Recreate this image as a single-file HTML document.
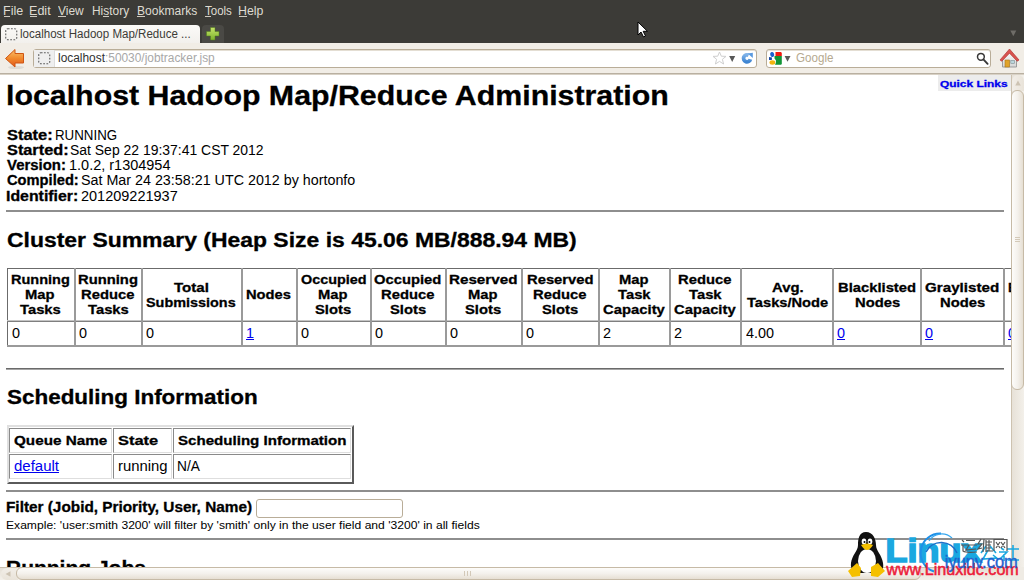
<!DOCTYPE html>
<html><head><meta charset="utf-8">
<style>
*{box-sizing:border-box}
html,body{margin:0;padding:0;width:1024px;height:580px;overflow:hidden;background:#fff;font-family:"Liberation Sans",sans-serif}
.a{position:absolute}
.t{position:absolute;white-space:pre;line-height:1;transform-origin:0 0}
.t[style*="bold"]{-webkit-text-stroke:0.3px currentColor}
#menubar{left:0;top:0;width:1024px;height:43px;background:#3c3b37}
#tab{left:1px;top:25px;width:199px;height:19px;background:linear-gradient(#fbfaf8,#f2f0ec);border-radius:4px 4px 0 0}
#newtab{left:202px;top:25px;width:22px;height:18px;background:#4a4945;border-radius:4px 4px 0 0}
#toolbar{left:0;top:43px;width:1024px;height:32px;background:#f1ede6;border-bottom:1px solid #d8d1c5;box-shadow:inset 0 -1px 0 #b9b0a1}
.urlbar{top:49px;height:19px;background:#fff;border:1px solid #b9ad98;border-radius:3px;box-shadow:inset 0 1px 0 #e4ded3}
#vscroll{left:1011px;top:75px;width:13px;height:492px;background:linear-gradient(90deg,#e6e0d6,#f3f0ea)}
#hscroll{left:0;top:567px;width:1011px;height:13px;background:linear-gradient(#e6e0d6,#f3f0ea);border-top:1px solid #c9bfae}
.hr{position:absolute;height:2px;background:#8e8e8e;left:6px;width:998px}
.vl{position:absolute;width:2px;background:#9a9a9a;top:268px;height:79px}
.cell{position:absolute;border-top:1px solid #8a8a8a;border-left:1px solid #8a8a8a;border-right:1px solid #dedede;border-bottom:1px solid #dedede}
a{color:#0000ee;text-decoration:underline}
</style></head><body>
<!-- menubar -->
<div id="menubar" class="a"></div>
<div class="a" style="left:4px;top:16px;width:6px;height:1px;background:#cfcac0"></div><div class="a" style="left:30px;top:16px;width:7px;height:1px;background:#cfcac0"></div><div class="a" style="left:58px;top:16px;width:8px;height:1px;background:#cfcac0"></div><div class="a" style="left:103px;top:16px;width:6px;height:1px;background:#cfcac0"></div><div class="a" style="left:137px;top:16px;width:8px;height:1px;background:#cfcac0"></div><div class="a" style="left:205px;top:16px;width:6px;height:1px;background:#cfcac0"></div><div class="a" style="left:239px;top:16px;width:8px;height:1px;background:#cfcac0"></div><svg class="a" style="left:1010px;top:30px" width="7" height="7"><path d="M0.3 0.5H6.3L3.3 6.2Z" fill="#6f6d68"/></svg>
<!-- tab -->
<div id="tab" class="a"></div>
<svg class="a" style="left:5px;top:28px" width="13" height="13" viewBox="0 0 13 13"><rect x="0.75" y="0.75" width="11" height="11" rx="2" fill="none" stroke="#606060" stroke-width="1.1" stroke-dasharray="1.8 1.4"/></svg>
<div id="newtab" class="a"></div>
<svg class="a" style="left:205px;top:26px" width="16" height="16" viewBox="0 0 16 16"><defs><linearGradient id="pg" x1="0" y1="0" x2="0" y2="1"><stop offset="0" stop-color="#c6e46a"/><stop offset="1" stop-color="#7db22c"/></linearGradient></defs><path d="M5.5 1.5 H10 V5.5 H14 V10 H10 V14 H5.5 V10 H1.5 V5.5 H5.5 Z" fill="url(#pg)" stroke="#4e7a1a" stroke-width="0.8" stroke-opacity="0.6"/></svg>
<!-- toolbar -->
<div id="toolbar" class="a"></div>
<svg class="a" style="left:4px;top:48px" width="22" height="22" viewBox="0 0 22 22">
<defs><linearGradient id="ag" x1="0" y1="0" x2="0" y2="1"><stop offset="0" stop-color="#fbc36e"/><stop offset="0.5" stop-color="#f18a2e"/><stop offset="1" stop-color="#e0561a"/></linearGradient></defs><ellipse cx="12" cy="19.5" rx="8" ry="1.6" fill="#000" opacity="0.08"/><path d="M1.5 10.5 L11 1.5 L11 5.5 L19.5 5.5 L19.5 15 L11 15 L11 19 Z" fill="url(#ag)" stroke="#cf5512" stroke-width="1" stroke-linejoin="round"/>
</svg>
<div class="a urlbar" style="left:33px;width:724px"></div>
<div class="a" style="left:34px;top:50px;width:21px;height:17px;background:#efefef;border-right:1px solid #ddd"></div>
<svg class="a" style="left:38px;top:52px" width="13" height="13" viewBox="0 0 13 13"><rect x="0.75" y="0.75" width="11" height="11" rx="2" fill="none" stroke="#606060" stroke-width="1.1" stroke-dasharray="1.8 1.4"/></svg>
<svg class="a" style="left:712px;top:51px" width="15" height="14" viewBox="0 0 15 14"><path d="M7.5 1 L9.3 5.2 L14 5.4 L10.4 8.3 L11.6 13 L7.5 10.4 L3.4 13 L4.6 8.3 L1 5.4 L5.7 5.2 Z" fill="#fff" stroke="#cfcfcf" stroke-width="1"/></svg>
<svg class="a" style="left:729px;top:56px" width="7" height="7"><path d="M0.2 0H6.2L3.2 6Z" fill="#575757"/></svg>
<svg class="a" style="left:741px;top:52px" width="13" height="13" viewBox="0 0 13 13"><defs><linearGradient id="rg" x1="0" y1="0" x2="0" y2="1"><stop offset="0" stop-color="#7fb2e8"/><stop offset="1" stop-color="#3f86d3"/></linearGradient></defs><path d="M9.4 7.2 A3.5 3.5 0 1 1 7.6 3.2" fill="none" stroke="url(#rg)" stroke-width="3.8"/><path d="M6.8 1.6 L11.8 0.8 L11.8 5.9 Z" fill="#5a9ae0"/></svg>
<div class="a urlbar" style="left:766px;width:225px"></div>
<svg class="a" style="left:764px;top:48px" width="32" height="22" viewBox="0 0 32 22">
<ellipse cx="8.2" cy="6.5" rx="2" ry="2.5" fill="#1a5fd0" transform="rotate(-15 8.2 6.5)"/>
<path d="M5 9 L8 9.5 L7.8 11.9 L5 11.9 Z" fill="#1747a6"/>
<ellipse cx="8.4" cy="14.5" rx="2.9" ry="2.2" fill="#f2b50f"/>
<path d="M11.5 4 H17 L17.8 5 V8.1 H11.5 Z" fill="#f01a10"/>
<path d="M10.5 8.1 H17.8 V16 L17 16.7 H11 L12 14.5 Q12.5 12 10.5 10.5 Z" fill="#119436"/>
<path d="M20.6 8 H26.5 L23.5 13.8 Z" fill="#5a5a5a"/>
</svg>
<svg class="a" style="left:975px;top:51px" width="15" height="15" viewBox="0 0 15 15"><circle cx="5.9" cy="5.8" r="3.4" fill="none" stroke="#383838" stroke-width="1.5"/><path d="M8.4 8.4 L12.6 12.8" stroke="#383838" stroke-width="1.9" stroke-linecap="round"/></svg>
<svg class="a" style="left:999px;top:48px" width="21" height="21" viewBox="0 0 21 21">
<defs><linearGradient id="hb" x1="0" y1="0" x2="0" y2="1"><stop offset="0" stop-color="#f6f6f6"/><stop offset="1" stop-color="#d6d6d6"/></linearGradient></defs>
<path d="M3.5 11.5 L10.5 4.5 L17.5 11.5 V19 H3.5 Z" fill="url(#hb)" stroke="#9b9b9b" stroke-width="1"/>
<path d="M1 12 L10.5 1 L20 12 L18.2 13.2 L10.5 5.2 L2.8 13.2 Z" fill="#d9534f" stroke="#b13a36" stroke-width="0.7" stroke-linejoin="round"/>
<rect x="6" y="12" width="4.6" height="7" fill="#e0a32a" stroke="#a8741a" stroke-width="0.6"/>
<rect x="11.8" y="12.3" width="3.6" height="3.2" fill="#bcd6dc" stroke="#7f8f93" stroke-width="0.6"/>
</svg>
<!-- content -->
<div class="a" style="left:938px;top:75px;width:73px;height:16px;background:#ececec"></div>
<div class="hr" style="top:210px"></div>
<div class="hr" style="top:368px;background:linear-gradient(#6a6a6a 50%,#a5a5a5 50%)"></div>
<div class="hr" style="top:490px"></div>
<div class="hr" style="top:538px"></div>
<!-- table 1 -->
<div class="a" style="left:7px;top:268px;width:1004px;height:1px;background:#6b6b6b"></div>
<div class="a" style="left:7px;top:268px;width:1px;height:79px;background:#6b6b6b"></div>
<div class="a" style="left:7px;top:320px;width:1004px;height:2px;background:linear-gradient(#c4c4c4 50%,#7f7f7f 50%)"></div>
<div class="a" style="left:7px;top:345px;width:1004px;height:2px;background:#9a9a9a"></div>
<div class="vl" style="left:74px"></div>
<div class="vl" style="left:141px"></div>
<div class="vl" style="left:241px"></div>
<div class="vl" style="left:296px"></div>
<div class="vl" style="left:370px"></div>
<div class="vl" style="left:445px"></div>
<div class="vl" style="left:521px"></div>
<div class="vl" style="left:598px"></div>
<div class="vl" style="left:669px"></div>
<div class="vl" style="left:740px"></div>
<div class="vl" style="left:832px"></div>
<div class="vl" style="left:920px"></div>
<div class="vl" style="left:1003px"></div>
<!-- table 2 -->
<div class="a" style="left:7px;top:425px;width:347px;height:59px;border-top:2px solid #e0e0e0;border-left:2px solid #e0e0e0;border-right:2px solid #5a5a5a;border-bottom:2px solid #5a5a5a"></div>
<div class="cell" style="left:9px;top:428px;width:103px;height:25px"></div>
<div class="cell" style="left:113px;top:428px;width:59px;height:25px"></div>
<div class="cell" style="left:173px;top:428px;width:178px;height:25px"></div>
<div class="cell" style="left:9px;top:454px;width:103px;height:25px"></div>
<div class="cell" style="left:113px;top:454px;width:59px;height:25px"></div>
<div class="cell" style="left:173px;top:454px;width:178px;height:25px"></div>
<!-- filter input -->
<div class="a" style="left:256px;top:499px;width:147px;height:19px;border:1px solid #b9ad98;border-radius:3px;background:#fff"></div>
<div class="t" style="left:3.10px;top:5.00px;font-size:12.5px;color:#dfdbd2;transform:scaleX(1.0000)">File</div>
<div class="t" style="left:29.00px;top:5.00px;font-size:12.5px;color:#dfdbd2;transform:scaleX(1.0049)">Edit</div>
<div class="t" style="left:57.76px;top:5.00px;font-size:12.5px;color:#dfdbd2;transform:scaleX(0.9585)">View</div>
<div class="t" style="left:92.05px;top:5.00px;font-size:12.5px;color:#dfdbd2;transform:scaleX(0.9536)">History</div>
<div class="t" style="left:136.54px;top:5.00px;font-size:12.5px;color:#dfdbd2;transform:scaleX(0.9639)">Bookmarks</div>
<div class="t" style="left:204.77px;top:5.00px;font-size:12.5px;color:#dfdbd2;transform:scaleX(0.9193)">Tools</div>
<div class="t" style="left:238.41px;top:5.00px;font-size:12.5px;color:#dfdbd2;transform:scaleX(0.9856)">Help</div>
<div class="t" style="left:20.21px;top:27.70px;font-size:12.5px;color:#3c3b37;transform:scaleX(0.9235)">localhost Hadoop Map/Reduce ...</div>
<div class="t" style="left:58.09px;top:52.00px;font-size:12.5px;color:#303030;transform:scaleX(0.9517)">localhost<span style="color:#a8a8a8">:50030/jobtracker.jsp</span></div>
<div class="t" style="left:795.60px;top:52.00px;font-size:12.5px;color:#b5a98f;transform:scaleX(0.9282)">Google</div>
<div class="t" style="left:940.37px;top:78.60px;font-size:9.5px;font-weight:bold;color:#0000ee;transform:scaleX(1.2547)">Quick Links</div>
<div class="t" style="left:6.09px;top:82.00px;font-size:27.5px;font-weight:bold;transform:scaleX(1.1029)">localhost Hadoop Map/Reduce Administration</div>
<div class="t" style="left:6.91px;top:127.60px;font-size:14px;font-weight:bold;transform:scaleX(1.1757)">State:</div>
<div class="t" style="left:54.81px;top:127.60px;font-size:14px;transform:scaleX(0.9508)">RUNNING</div>
<div class="t" style="left:6.92px;top:142.90px;font-size:14px;font-weight:bold;transform:scaleX(1.1647)">Started:</div>
<div class="t" style="left:69.95px;top:142.90px;font-size:14px;transform:scaleX(0.9964)">Sat Sep 22 19:37:41 CST 2012</div>
<div class="t" style="left:7.23px;top:158.10px;font-size:14px;font-weight:bold;transform:scaleX(1.0660)">Version:</div>
<div class="t" style="left:68.57px;top:158.10px;font-size:14px;transform:scaleX(1.0346)">1.0.2, r1304954</div>
<div class="t" style="left:6.98px;top:173.30px;font-size:14px;font-weight:bold;transform:scaleX(1.0481)">Compiled:</div>
<div class="t" style="left:80.63px;top:173.30px;font-size:14px;transform:scaleX(1.0215)">Sat Mar 24 23:58:21 UTC 2012 by hortonfo</div>
<div class="t" style="left:6.37px;top:188.60px;font-size:14px;font-weight:bold;transform:scaleX(1.1333)">Identifier:</div>
<div class="t" style="left:80.62px;top:188.60px;font-size:14px;transform:scaleX(1.0348)">201209221937</div>
<div class="t" style="left:6.54px;top:230.30px;font-size:20px;font-weight:bold;transform:scaleX(1.1467)">Cluster Summary (Heap Size is 45.06 MB/888.94 MB)</div>
<div class="t" style="left:11.13px;top:273.00px;font-size:13.5px;font-weight:bold;transform:scaleX(1.0730)">Running</div>
<div class="t" style="left:25.45px;top:287.80px;font-size:13.5px;font-weight:bold;transform:scaleX(1.0948)">Map</div>
<div class="t" style="left:20.25px;top:302.50px;font-size:13.5px;font-weight:bold;transform:scaleX(1.0948)">Tasks</div>
<div class="t" style="left:78.03px;top:273.00px;font-size:13.5px;font-weight:bold;transform:scaleX(1.0948)">Running</div>
<div class="t" style="left:81.04px;top:287.80px;font-size:13.5px;font-weight:bold;transform:scaleX(1.0948)">Reduce</div>
<div class="t" style="left:87.75px;top:302.50px;font-size:13.5px;font-weight:bold;transform:scaleX(1.0948)">Tasks</div>
<div class="t" style="left:174.27px;top:280.80px;font-size:13.5px;font-weight:bold;transform:scaleX(1.1167)">Total</div>
<div class="t" style="left:146.47px;top:295.80px;font-size:13.5px;font-weight:bold;transform:scaleX(1.0675)">Submissions</div>
<div class="t" style="left:245.86px;top:287.80px;font-size:13.5px;font-weight:bold;transform:scaleX(1.0893)">Nodes</div>
<div class="t" style="left:300.77px;top:273.00px;font-size:13.5px;font-weight:bold;transform:scaleX(1.0667)">Occupied</div>
<div class="t" style="left:318.25px;top:287.80px;font-size:13.5px;font-weight:bold;transform:scaleX(1.0948)">Map</div>
<div class="t" style="left:315.24px;top:302.50px;font-size:13.5px;font-weight:bold;transform:scaleX(1.0948)">Slots</div>
<div class="t" style="left:374.21px;top:273.00px;font-size:13.5px;font-weight:bold;transform:scaleX(1.0948)">Occupied</div>
<div class="t" style="left:380.64px;top:287.80px;font-size:13.5px;font-weight:bold;transform:scaleX(1.0948)">Reduce</div>
<div class="t" style="left:389.54px;top:302.50px;font-size:13.5px;font-weight:bold;transform:scaleX(1.0948)">Slots</div>
<div class="t" style="left:449.07px;top:273.00px;font-size:13.5px;font-weight:bold;transform:scaleX(1.1254)">Reserved</div>
<div class="t" style="left:468.35px;top:287.80px;font-size:13.5px;font-weight:bold;transform:scaleX(1.0948)">Map</div>
<div class="t" style="left:465.34px;top:302.50px;font-size:13.5px;font-weight:bold;transform:scaleX(1.0948)">Slots</div>
<div class="t" style="left:526.91px;top:273.00px;font-size:13.5px;font-weight:bold;transform:scaleX(1.0948)">Reserved</div>
<div class="t" style="left:533.34px;top:287.80px;font-size:13.5px;font-weight:bold;transform:scaleX(1.0948)">Reduce</div>
<div class="t" style="left:542.24px;top:302.50px;font-size:13.5px;font-weight:bold;transform:scaleX(1.0948)">Slots</div>
<div class="t" style="left:619.15px;top:273.00px;font-size:13.5px;font-weight:bold;transform:scaleX(1.0948)">Map</div>
<div class="t" style="left:617.78px;top:287.80px;font-size:13.5px;font-weight:bold;transform:scaleX(1.0948)">Task</div>
<div class="t" style="left:603.15px;top:302.50px;font-size:13.5px;font-weight:bold;transform:scaleX(1.0991)">Capacity</div>
<div class="t" style="left:678.44px;top:273.00px;font-size:13.5px;font-weight:bold;transform:scaleX(1.0948)">Reduce</div>
<div class="t" style="left:688.98px;top:287.80px;font-size:13.5px;font-weight:bold;transform:scaleX(1.0948)">Task</div>
<div class="t" style="left:674.47px;top:302.50px;font-size:13.5px;font-weight:bold;transform:scaleX(1.0948)">Capacity</div>
<div class="t" style="left:771.80px;top:280.80px;font-size:13.5px;font-weight:bold;transform:scaleX(1.1009)">Avg.</div>
<div class="t" style="left:746.93px;top:295.80px;font-size:13.5px;font-weight:bold;transform:scaleX(1.0851)">Tasks/Node</div>
<div class="t" style="left:838.36px;top:280.80px;font-size:13.5px;font-weight:bold;transform:scaleX(1.0948)">Blacklisted</div>
<div class="t" style="left:854.65px;top:295.80px;font-size:13.5px;font-weight:bold;transform:scaleX(1.0948)">Nodes</div>
<div class="t" style="left:925.44px;top:280.80px;font-size:13.5px;font-weight:bold;transform:scaleX(1.1243)">Graylisted</div>
<div class="t" style="left:939.55px;top:295.80px;font-size:13.5px;font-weight:bold;transform:scaleX(1.0948)">Nodes</div>
<div class="t" style="left:1008.00px;top:280.80px;font-size:13.5px;font-weight:bold;transform:scaleX(1.0000)">Excluded</div>
<div class="t" style="left:11.88px;top:325.60px;font-size:14px;transform:scaleX(1.0302)">0</div>
<div class="t" style="left:79.38px;top:325.60px;font-size:14px;transform:scaleX(1.0302)">0</div>
<div class="t" style="left:146.48px;top:325.60px;font-size:14px;transform:scaleX(1.0302)">0</div>
<div class="t" style="left:245.97px;top:325.60px;font-size:14px;transform:scaleX(1.0302)"><a>1</a></div>
<div class="t" style="left:300.73px;top:325.60px;font-size:14px;transform:scaleX(1.0302)">0</div>
<div class="t" style="left:375.08px;top:325.60px;font-size:14px;transform:scaleX(1.0302)">0</div>
<div class="t" style="left:449.68px;top:325.60px;font-size:14px;transform:scaleX(1.0302)">0</div>
<div class="t" style="left:526.18px;top:325.60px;font-size:14px;transform:scaleX(1.0302)">0</div>
<div class="t" style="left:602.98px;top:325.60px;font-size:14px;transform:scaleX(1.0302)">2</div>
<div class="t" style="left:674.03px;top:325.60px;font-size:14px;transform:scaleX(1.0302)">2</div>
<div class="t" style="left:745.74px;top:325.60px;font-size:14px;transform:scaleX(1.0302)">4.00</div>
<div class="t" style="left:837.28px;top:325.60px;font-size:14px;transform:scaleX(1.0302)"><a>0</a></div>
<div class="t" style="left:925.48px;top:325.60px;font-size:14px;transform:scaleX(1.0302)"><a>0</a></div>
<div class="t" style="left:1008.48px;top:325.60px;font-size:14px;transform:scaleX(1.0302)"><a>0</a></div>
<div class="t" style="left:6.56px;top:386.50px;font-size:20px;font-weight:bold;transform:scaleX(1.1223)">Scheduling Information</div>
<div class="t" style="left:14.03px;top:433.60px;font-size:13.5px;font-weight:bold;transform:scaleX(1.1301)">Queue Name</div>
<div class="t" style="left:118.39px;top:433.60px;font-size:13.5px;font-weight:bold;transform:scaleX(1.2156)">State</div>
<div class="t" style="left:178.14px;top:433.60px;font-size:13.5px;font-weight:bold;transform:scaleX(1.1177)">Scheduling Information</div>
<div class="t" style="left:14.07px;top:458.80px;font-size:14px;transform:scaleX(1.0699)"><a>default</a></div>
<div class="t" style="left:117.94px;top:458.80px;font-size:14px;transform:scaleX(1.0615)">running</div>
<div class="t" style="left:177.47px;top:458.80px;font-size:14px;transform:scaleX(0.9818)">N/A</div>
<div class="t" style="left:5.90px;top:499.60px;font-size:14px;font-weight:bold;transform:scaleX(1.0955)">Filter (Jobid, Priority, User, Name)</div>
<div class="t" style="left:6.20px;top:520.00px;font-size:11px;transform:scaleX(1.1011)">Example: 'user:smith 3200' will filter by 'smith' only in the user field and '3200' in all fields</div>
<div class="t" style="left:6.49px;top:558.00px;font-size:20px;font-weight:bold;transform:scaleX(1.0491)">Running Jobs</div>
<div id="vscroll" class="a"></div>
<div class="a" style="left:1011px;top:75px;width:1px;height:492px;background:#cdc2b0"></div>
<div class="a" style="left:1012px;top:75px;width:12px;height:16px;border-radius:6px 6px 0 0;background:linear-gradient(90deg,#f2eee8,#e9e3d9)"></div>
<svg class="a" style="left:1015px;top:80px" width="6" height="6"><path d="M3 0.5L5.8 5.5H0.2Z" fill="#cdc3b3"/></svg>
<div class="a" style="left:1011px;top:90px;width:13px;height:300px;border:1px solid #c6baa6;border-radius:6px;background:linear-gradient(90deg,#fdfcfa,#f4f1ec 50%,#e6dfd3)"></div>
<div class="a" style="left:1015px;top:237px;width:5px;height:1px;background:#d3c9b8"></div>
<div class="a" style="left:1015px;top:239px;width:5px;height:1px;background:#d3c9b8"></div>
<div class="a" style="left:1015px;top:241px;width:5px;height:1px;background:#d3c9b8"></div>
<div id="hscroll" class="a"></div>
<div class="a" style="left:1px;top:568px;width:17px;height:12px;border-radius:6px 0 0 6px;background:linear-gradient(#f2eee8,#e9e3d9)"></div>
<svg class="a" style="left:5px;top:571px" width="6" height="6"><path d="M0.5 3L5.5 0.2V5.8Z" fill="#cdc3b3"/></svg>
<div class="a" style="left:16px;top:567px;width:905px;height:13px;border:1px solid #c6baa6;border-radius:6px;background:linear-gradient(#fdfcfa,#f4f1ec 50%,#e6dfd3)"></div>
<div class="a" style="left:464px;top:571px;width:1px;height:5px;background:#d3c9b8"></div>
<div class="a" style="left:467px;top:571px;width:1px;height:5px;background:#d3c9b8"></div>
<div class="a" style="left:470px;top:571px;width:1px;height:5px;background:#d3c9b8"></div>
<div class="a" style="left:1011px;top:567px;width:13px;height:13px;background:#efebe4"></div>
<svg class="a" style="left:0;top:0" width="1024" height="580" viewBox="0 0 1024 580">
<g font-family="Liberation Sans" font-weight="bold">
<text x="885.5" y="562.3" font-size="33" fill="#1ba8e0" stroke="#1ba8e0" stroke-width="1.6" textLength="96" lengthAdjust="spacingAndGlyphs">Linux</text>
</g>
<g fill="none">
<path d="M941 533.5 A19.5 19.5 0 0 0 934 571.5" stroke="#1e90e8" stroke-width="2"/>
<path d="M926 552 A17 17 0 0 1 957 553" stroke="#1d6fc9" stroke-width="1.6"/>
<path d="M929 541 A15 15 0 0 1 952 538" stroke="#38a8ef" stroke-width="1.2"/>
</g>
<g stroke="#1ba8e0" stroke-width="1.6" fill="none">
<path d="M986 546 L981 553 M990 546 L996 553 M988 550 L983 559 L997 558 M993 555 L998 559"/>
<path d="M1001 548 L1004 550 M999 552 L1007 552 L1000 559 M1004 554 V561 M1007 549 H1019 M1013 545 V560 M1008 560 H1019"/>
</g>
<g stroke="#555" stroke-width="1.2" fill="none">
<path d="M966 540.5 H975 M964 545 H977 M969 545 L966 550 L976 549 M962 540 L964 542 M961 545 H963 V551 Q966 553 977 552"/>
<path d="M981 539 L978 544 L982 544 L978 549 L982 548 M984 539 L983 552 M986 540 V552 M986 542 H992 M986 545 H991 M986 548 H991 M986 551 H993 M989 540 V551"/>
<path d="M994 551 V539.5 H1007 V551 M996 542 L1000 548 M1000 542 L996 548 M1001 542 L1005 548 M1005 542 L1001 548"/>
</g>
<text x="886.3" y="574.6" font-family="Liberation Sans" font-size="15.6" fill="#ec1c3a" stroke="#ec1c3a" stroke-width="0.5" textLength="132.5" lengthAdjust="spacingAndGlyphs">www.Linuxidc.com</text>
<text x="944.8" y="568.3" font-family="Liberation Sans" font-size="18.5" fill="#1f63cf" stroke="#1f63cf" stroke-width="0.4" textLength="73" lengthAdjust="spacingAndGlyphs">iyunv.com</text>
<g transform="translate(840 525)">
<path d="M26 7 C19 7 18 14 18 20 C18 26 12 30 11 38 C10 44 14 48 20 48 L36 48 C42 48 44 44 43 38 C42 30 36 26 36 20 C36 14 33 7 26 7 Z" fill="#111"/>
<ellipse cx="27" cy="36" rx="9" ry="12" fill="#fff"/>
<ellipse cx="24" cy="16.5" rx="2.3" ry="3" fill="#fff"/><ellipse cx="30" cy="16.5" rx="2.3" ry="3" fill="#fff"/>
<circle cx="24.5" cy="17" r="1" fill="#000"/><circle cx="29.5" cy="17" r="1" fill="#000"/>
<path d="M21 20 Q27 17 33 20 Q30 25 27 25 Q24 25 21 20 Z" fill="#f5c000"/>
<path d="M8 46 L17 38 L21 43 L20 51 L12 52 Z" fill="#f5c000"/>
<path d="M31 42 L38 38 L45 46 L38 52 L31 51 Z" fill="#f5c000"/>
</g>
</svg>
<svg class="a" style="left:637px;top:21px" width="12" height="17" viewBox="0 0 12 17"><path d="M1 1 L1 14 L4 11 L6.5 16 L8.5 15 L6.2 10.3 L10.5 10.3 Z" fill="#fff" stroke="#000" stroke-width="1"/></svg>

</body></html>
